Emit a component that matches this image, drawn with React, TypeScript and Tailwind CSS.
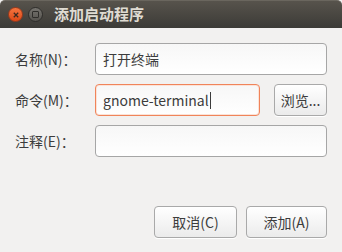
import React from "react"

const font = { fontFamily: '"Noto Sans CJK SC", "Noto Sans", "DejaVu Sans", sans-serif' }

function Field({ value, focused, caret }: { value?: string; focused?: boolean; caret?: boolean }) {
  return (
    <div
      className={`flex h-[32px] flex-1 items-center rounded-[4px] border bg-gradient-to-b from-[#f7f7f7] to-white px-[7px] text-[14px] text-[#3c3c3c] ${
        focused ? "border-[#f0845a] shadow-[inset_0_0_0_1px_#fbe3d8]" : "border-[#a6a6a6]"
      }`}
    >
      <span className="leading-none">{value}</span>
      {caret && <span className="ml-[1px] h-[17px] w-[1px] bg-[#3c3c3c]" />}
    </div>
  )
}

function Btn({ children, className = "" }: { children: React.ReactNode; className?: string }) {
  return (
    <div
      className={`flex h-[32px] items-center justify-center rounded-[4px] border border-[#a9a9a9] bg-gradient-to-b from-white to-[#ebebeb] text-[14px] text-[#3c3c3c] shadow-[0_1px_0_#ffffff] ${className}`}
    >
      {children}
    </div>
  )
}

export default function App() {
  return (
    <div className="h-[252px] w-[342px] overflow-hidden bg-[#f2f1f0]" style={font}>
      <div className="flex h-[28px] items-center rounded-t-[5px] border-t border-[#6a665e] bg-gradient-to-b from-[#57534c] to-[#3c3b37] pl-[8px]">
        <div className="flex h-[15px] w-[15px] items-center justify-center rounded-full border border-[#9c3a1c] bg-gradient-to-b from-[#f4743e] to-[#dd4814]">
          <svg width="6" height="6" viewBox="0 0 6 6">
            <path d="M0.8 0.8 L5.2 5.2 M5.2 0.8 L0.8 5.2" stroke="#3c2a20" strokeWidth="1.3" />
          </svg>
        </div>
        <div className="ml-[5px] flex h-[15px] w-[15px] items-center justify-center rounded-full border border-[#2f2e2b] bg-gradient-to-b from-[#76746f] to-[#55534e]">
          <div className="h-[7px] w-[7px] rounded-[1px] border-[1.5px] border-[#2f2e2b]" />
        </div>
        <div className="ml-[11px] text-[15px] font-bold text-[#dfdbd2]">添加启动程序</div>
      </div>

      <div className="flex flex-col gap-[9px] pl-[15px] pr-[15px] pt-[15px]">
        <div className="flex items-center">
          <div className="w-[80px] text-[14px] text-[#3c3c3c]">名称(N)：</div>
          <Field value="打开终端" />
        </div>
        <div className="flex items-center">
          <div className="w-[80px] text-[14px] text-[#3c3c3c]">命令(M)：</div>
          <Field value="gnome-terminal" focused caret />
          <Btn className="ml-[14px] w-[53px]">浏览...</Btn>
        </div>
        <div className="flex items-center">
          <div className="w-[80px] text-[14px] text-[#3c3c3c]">注释(E)：</div>
          <Field />
        </div>
      </div>

      <div className="mt-[49px] flex justify-end gap-[9px] pr-[15px]">
        <Btn className="w-[83px]">取消(C)</Btn>
        <Btn className="w-[81px]">添加(A)</Btn>
      </div>
    </div>
  )
}
